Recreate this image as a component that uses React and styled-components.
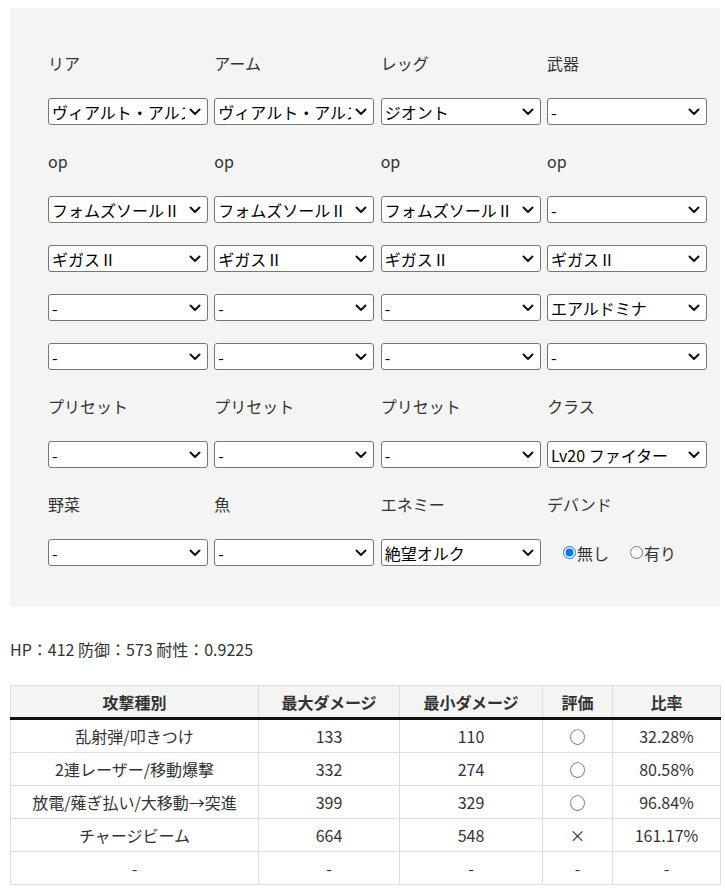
import React from "react";
import styled, { createGlobalStyle } from "styled-components";

const Global = createGlobalStyle`
  html, body { margin: 0; padding: 0; background: #fff; }
  body { font-family: "Noto Sans CJK JP", "Noto Sans", sans-serif; color: #333; font-size: 16px; }
`;

const Page = styled.div`
  padding: 8px 5px 0 10px;
`;

const Panel = styled.div`
  background: #f4f4f4;
  padding: 30px 14px 30px 38px;
`;

const Grid = styled.div`
  display: grid;
  grid-template-columns: repeat(4, 166.33px);
  grid-auto-rows: 49px;
  align-items: center;
`;

const Label = styled.div`
  font-size: 16px;
  line-height: 20px;
  color: #333;
`;

const SelectWrap = styled.div`
  position: relative;
  width: 160px;
  height: 27px;
`;

const Select = styled.select`
  appearance: none;
  -webkit-appearance: none;
  width: 160px;
  height: 27px;
  font-family: "Noto Sans CJK JP", sans-serif;
  font-size: 16px;
  color: #000;
  background: #fff;
  border: 1px solid #767676;
  border-radius: 3px;
  padding: 0 22px 0 3px;
  box-sizing: border-box;
  white-space: nowrap;
  overflow: hidden;
`;

const Chevron = styled.svg`
  position: absolute;
  right: 7px;
  top: 10px;
  width: 12px;
  height: 8px;
  pointer-events: none;
`;

const RadioGroup = styled.div`
  display: flex;
  align-items: center;
  padding-left: 11px;
  font-size: 16px;
  color: #333;
`;

const RadioLabel = styled.label`
  display: flex;
  align-items: center;
  margin-right: 16px;
  input { margin: 0 1px 0 5px; width: 13px; height: 13px; }
`;

const Stats = styled.p`
  margin: 30px 0 24px;
  font-size: 16px;
  line-height: 24px;
  color: #333;
`;

const Table = styled.table`
  border-collapse: collapse;
  width: 710px;
  table-layout: fixed;
  font-size: 16px;
  color: #333;
`;

const Th = styled.th`
  background: #f4f4f4;
  border: 1px solid #ddd;
  border-bottom: 3px solid #111;
  height: 31px;
  padding: 0;
  font-weight: bold;
  text-align: center;
  color: #333;
`;

const Td = styled.td`
  border: 1px solid #ddd;
  height: 32px;
  padding: 0;
  text-align: center;
`;

const Sel = ({ v }) => (
  <SelectWrap>
    <Select defaultValue={v}>
      <option value={v}>{v}</option>
    </Select>
    <Chevron viewBox="0 0 12 8">
      <path d="M1.5 1.5 L6 6 L10.5 1.5" fill="none" stroke="#111" strokeWidth="2" strokeLinecap="round" strokeLinejoin="round" />
    </Chevron>
  </SelectWrap>
);

const rows = [
  ["label", ["リア", "アーム", "レッグ", "武器"]],
  ["sel", ["ヴィアルト・アルス", "ヴィアルト・アルス", "ジオント", "-"]],
  ["label", ["op", "op", "op", "op"]],
  ["sel", ["フォムズソールⅡ", "フォムズソールⅡ", "フォムズソールⅡ", "-"]],
  ["sel", ["ギガスⅡ", "ギガスⅡ", "ギガスⅡ", "ギガスⅡ"]],
  ["sel", ["-", "-", "-", "エアルドミナ"]],
  ["sel", ["-", "-", "-", "-"]],
  ["label", ["プリセット", "プリセット", "プリセット", "クラス"]],
  ["sel", ["-", "-", "-", "Lv20 ファイター"]],
  ["label", ["野菜", "魚", "エネミー", "デバンド"]],
];

const data = [
  ["乱射弾/叩きつけ", "133", "110", "○", "32.28%"],
  ["2連レーザー/移動爆撃", "332", "274", "○", "80.58%"],
  ["放電/薙ぎ払い/大移動→突進", "399", "329", "○", "96.84%"],
  ["チャージビーム", "664", "548", "×", "161.17%"],
  ["-", "-", "-", "-", "-"],
];

export default function App() {
  return (
    <Page>
      <Global />
      <Panel>
        <Grid>
          {rows.map(([type, items], i) =>
            items.map((it, j) =>
              type === "label" ? (
                <Label key={`${i}-${j}`}>{it}</Label>
              ) : (
                <Sel key={`${i}-${j}`} v={it} />
              )
            )
          )}
          <Sel v="-" />
          <Sel v="-" />
          <Sel v="絶望オルク" />
          <RadioGroup>
            <RadioLabel>
              <input type="radio" name="deband" defaultChecked />無し
            </RadioLabel>
            <RadioLabel>
              <input type="radio" name="deband" />有り
            </RadioLabel>
          </RadioGroup>
        </Grid>
      </Panel>
      <Stats>HP：412 防御：573 耐性：0.9225</Stats>
      <Table>
        <colgroup>
          <col style={{ width: 248 }} />
          <col style={{ width: 141 }} />
          <col style={{ width: 143 }} />
          <col style={{ width: 70 }} />
          <col style={{ width: 108 }} />
        </colgroup>
        <thead>
          <tr>
            <Th>攻撃種別</Th>
            <Th>最大ダメージ</Th>
            <Th>最小ダメージ</Th>
            <Th>評価</Th>
            <Th>比率</Th>
          </tr>
        </thead>
        <tbody>
          {data.map((r, i) => (
            <tr key={i}>
              {r.map((c, j) => (
                <Td key={j}>{c}</Td>
              ))}
            </tr>
          ))}
        </tbody>
      </Table>
    </Page>
  );
}
